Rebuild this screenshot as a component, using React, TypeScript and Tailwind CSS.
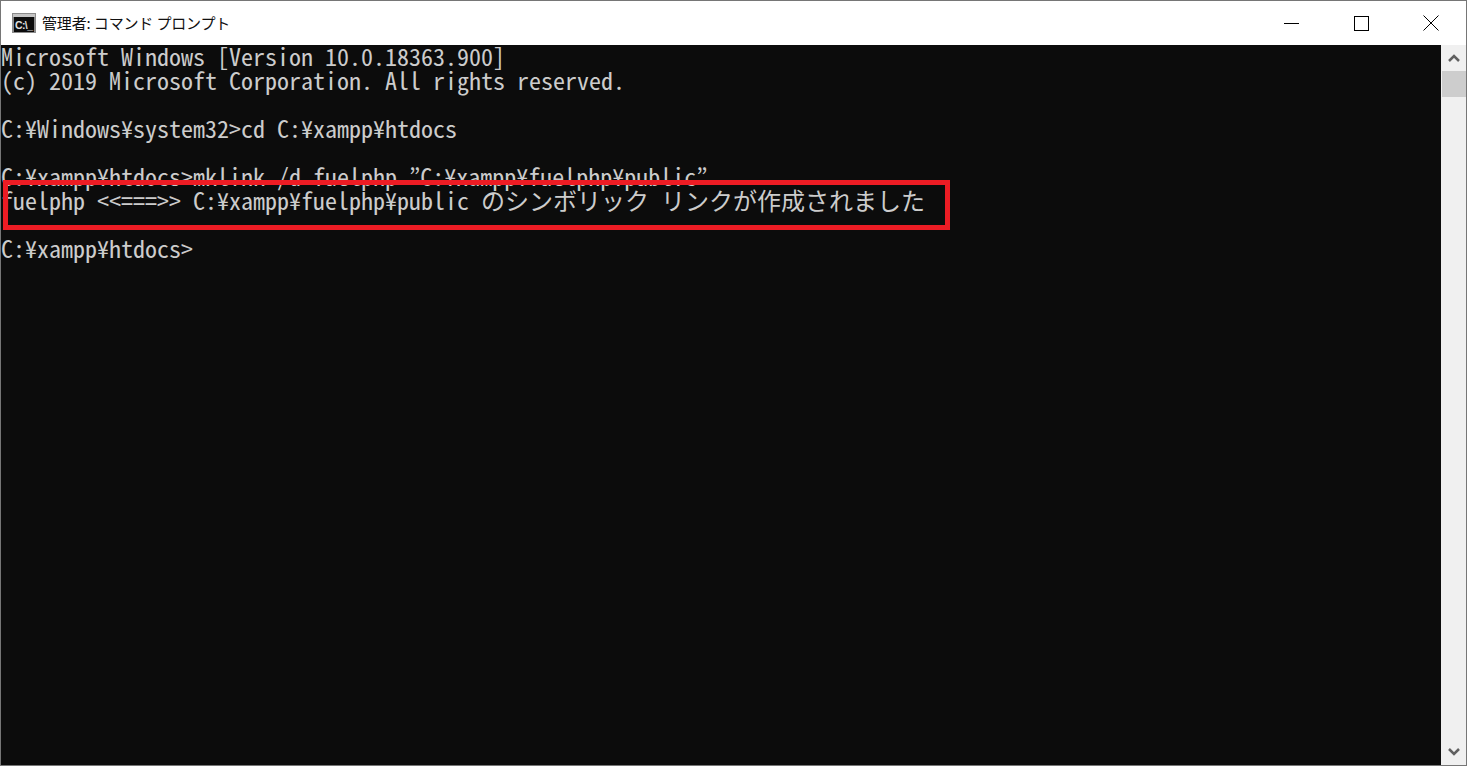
import React from 'react';

const Row: React.FC<{ text: string }> = ({ text }) => (
  <div className="h-6 whitespace-pre text-[24px] leading-[22px]">{text}</div>
);

const App: React.FC = () => {
  return (
    <div className="flex h-[766px] w-[1467px] flex-col overflow-hidden border border-[#767676] bg-white">
      {/* Title bar */}
      <div className="flex h-11 shrink-0 items-center justify-between bg-white">
        <div className="flex items-center">
          <svg className="ml-[11px]" width="24" height="20" viewBox="0 0 24 20">
            <rect x="0" y="0" width="24" height="20" fill="#8a8a8a" />
            <rect x="1" y="1" width="22" height="3" fill="#c4c4c4" />
            <rect x="2" y="4" width="20" height="15" fill="#0c0c0c" />
            <text x="3" y="15.5" fontFamily="Liberation Sans" fontSize="10.5" fontWeight="700" fill="#e0e0e0" textLength="18">C:\_</text>
          </svg>
          <span className="ml-[6px] -translate-y-px font-['Noto_Sans_CJK_JP',sans-serif] text-[15px] leading-none tracking-[-0.15px] text-[#111]">管理者: コマンド プロンプト</span>
        </div>
        <div className="flex h-full items-center">
          <button className="flex h-full w-[71px] items-center justify-center">
            <svg width="15" height="15" viewBox="0 0 15 15"><path d="M0 7.5H15" stroke="#000" strokeWidth="1" /></svg>
          </button>
          <button className="flex h-full w-[69px] items-center justify-center">
            <svg width="15" height="15" viewBox="0 0 15 15"><rect x="0.5" y="0.5" width="14" height="14" fill="none" stroke="#000" strokeWidth="1" /></svg>
          </button>
          <button className="flex h-full w-[70px] items-center justify-center">
            <svg width="16" height="16" viewBox="0 0 16 16"><path d="M0.5 0.5L15.5 15.5M15.5 0.5L0.5 15.5" stroke="#000" strokeWidth="1" /></svg>
          </button>
        </div>
      </div>

      {/* Console */}
      <div className="relative flex min-h-0 flex-1">
        <div className="flex-1 bg-[#0c0c0c] font-['Noto_Sans_CJK_JP',monospace] font-normal text-[#cccccc] [font-feature-settings:'hwid']">
          <Row text="Microsoft Windows [Version 10.0.18363.900]" />
          <Row text="(c) 2019 Microsoft Corporation. All rights reserved." />
          <Row text=" " />
          <Row text="C:¥Windows¥system32>cd C:¥xampp¥htdocs" />
          <Row text=" " />
          <Row text="C:¥xampp¥htdocs>mklink /d fuelphp ”C:¥xampp¥fuelphp¥public”" />
          <Row text="fuelphp <<===>> C:¥xampp¥fuelphp¥public のシンボリック リンクが作成されました" />
          <Row text=" " />
          <Row text="C:¥xampp¥htdocs>" />
        </div>

        {/* Red annotation */}
        <div className="absolute left-[2px] top-[135px] h-[50px] w-[947px] border-[5px] border-[#ed1c24]" />

        {/* Scrollbar */}
        <div className="flex w-[25px] shrink-0 flex-col bg-[#f0f0f0]">
          <div className="flex h-[26px] items-center justify-center">
            <svg width="12" height="10" viewBox="0 0 12 10"><path d="M1 8L6 3L11 8" fill="none" stroke="#606060" strokeWidth="2.5" /></svg>
          </div>
          <div className="mx-px h-[26px] w-[24px] bg-[#cdcdcd]" />
          <div className="flex-1" />
          <div className="flex h-[26px] items-center justify-center">
            <svg width="12" height="10" viewBox="0 0 12 10"><path d="M1 2L6 7L11 2" fill="none" stroke="#606060" strokeWidth="2.5" /></svg>
          </div>
        </div>
      </div>
    </div>
  );
};

export default App;
